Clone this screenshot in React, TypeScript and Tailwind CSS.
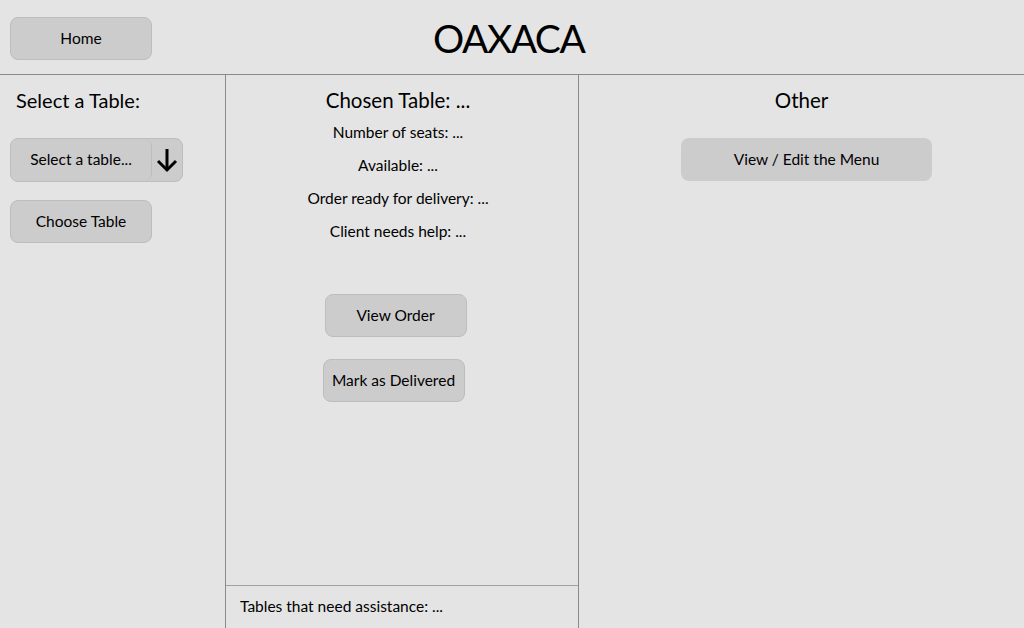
import React from 'react';

const btn =
  'h-[43px] rounded-lg border border-[#bdbdbd] bg-[#cdcccd] text-[15.5px] text-black flex items-center justify-center';

const App = () => {
  return (
    <div className="w-[1024px] h-[628px] overflow-hidden bg-[#e4e4e4] text-black flex flex-col" style={{ fontFamily: 'Lato, "Open Sans", sans-serif' }}>
      {/* Header */}
      <header className="h-[75px] shrink-0 border-b border-[#8a8a8a] relative flex items-center">
        <button className={`${btn} ml-[10px] mt-[3px] w-[142px]`}>Home</button>
        <h1 className="absolute left-[433px] top-[13px] text-[39px] leading-[50px] tracking-[-1.5px]">OAXACA</h1>
      </header>

      <div className="flex flex-1 min-h-0">
        {/* Left column */}
        <section className="w-[226px] shrink-0 border-r border-[#8a8a8a] px-[10px] pt-[12px]">
          <h2 className="text-[20px] leading-[26px] pl-[6px]">Select a Table:</h2>
          <div className="mt-[25px] flex">
            <div className="flex rounded-lg border border-[#bdbdbd] bg-[#cdcccd] h-[44px]">
              <div className="w-[141px] flex items-center justify-center rounded-lg border-r border-[#bdbdbd] text-[15.5px]">
                Select a table...
              </div>
              <div className="w-[30px] flex items-center justify-center">
                <svg width="22" height="26" viewBox="0 0 22 26" fill="none" stroke="black" strokeWidth="3" strokeLinecap="butt">
                  <path d="M11 2v21" />
                  <path d="M2 14l9 9 9-9" />
                </svg>
              </div>
            </div>
          </div>
          <button className={`${btn} mt-[18px] w-[142px]`}>Choose Table</button>
        </section>

        {/* Middle column */}
        <section className="w-[353px] shrink-0 border-r border-[#8a8a8a] flex flex-col">
          <div className="flex-1 flex flex-col items-center pt-[12px] pr-[8px]">
            <h2 className="text-[20.5px] leading-[26px]">Chosen Table: ...</h2>
            <div className="mt-[9px] flex flex-col items-center gap-[13px] text-[15.5px] leading-[20px]">
              <p>Number of seats: ...</p>
              <p>Available: ...</p>
              <p>Order ready for delivery: ...</p>
              <p>Client needs help: ...</p>
            </div>
            <button className={`${btn} mt-[53px] w-[142px] ml-[-5px]`}>View Order</button>
            <button className={`${btn} mt-[22px] w-[142px] ml-[-9px]`}>Mark as Delivered</button>
          </div>
          <div className="h-[43px] border-t border-[#a0a0a0] pl-[14px] pt-[10px] text-[15.5px] leading-[20px]">
            Tables that need assistance: ...
          </div>
        </section>

        {/* Right column */}
        <section className="flex-1 flex flex-col items-center pt-[12px]">
          <h2 className="text-[20.5px] leading-[26px]">Other</h2>
          <button className="mt-[25px] mr-[-10px] w-[251px] h-[43px] rounded-lg bg-[#cdcccd] text-[15.5px] flex items-center justify-center">
            View / Edit the Menu
          </button>
        </section>
      </div>
    </div>
  );
};

export default App;
